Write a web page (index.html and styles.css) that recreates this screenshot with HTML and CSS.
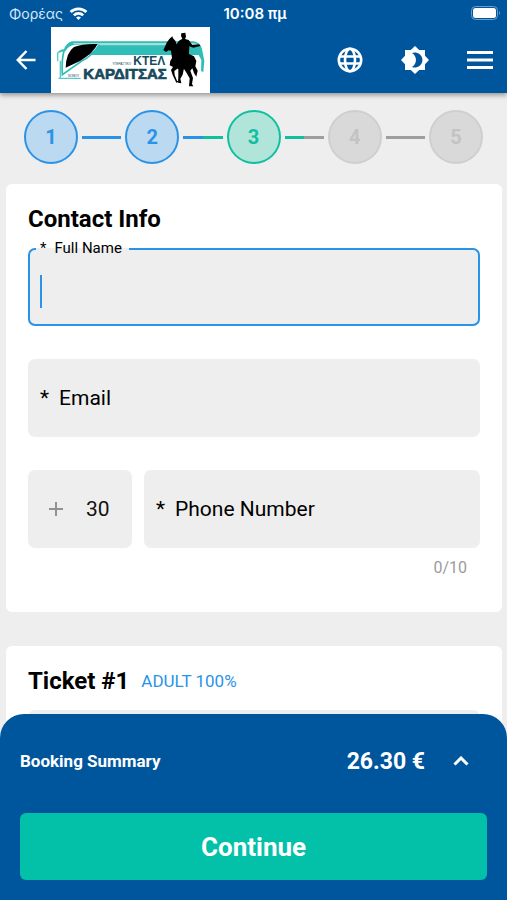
FILE: index.html
```
<!DOCTYPE html>
<html lang="en">
<head>
  <meta charset="UTF-8">
  <meta name="viewport" content="width=device-width, initial-scale=1">
  <title>Contact Info</title>
  <link rel="stylesheet" href="styles.css">
</head>
<body>
  <header class="header">
    <div class="status">
      <div class="carrier">
        <span>Φορέας</span>
        <svg width="19" height="13" viewBox="0 0 20 14" fill="none" stroke="#fff" stroke-width="3">
          <path d="M1.500 5.500a12 12 0 0 1 17 0"/>
          <path d="M5 9a7 7 0 0 1 10 0"/>
          <path d="M10 14l-2.600-2.600a3.700 3.700 0 0 1 5.200 0z" fill="#fff" stroke="none"/>
        </svg>
      </div>
      <span class="time">10:08 πμ</span>
      <svg class="battery" width="30" height="14" viewBox="0 0 30 14">
        <rect x="0.500" y="0.500" width="26" height="13" rx="4" fill="none" stroke="#6d9dc9"/>
        <rect x="2" y="2" width="23" height="10" rx="2.500" fill="#fff"/>
        <path d="M28 5q2 2 0 4z" fill="#6d9dc9"/>
      </svg>
    </div>
    <div class="appbar">
      <button class="icon-btn" type="button" aria-label="Back">
        <svg width="20" height="20" viewBox="0 0 20 20" fill="none" stroke="#fff" stroke-width="2.500">
          <path d="M19.500 10H2M10.500 1L1.800 10l8.700 9"/>
        </svg>
      </button>
      <a class="logo" href="#" aria-label="ΚΤΕΛ Καρδίτσας">
        <svg viewBox="153 79 477 198">
          <rect x="153" y="79" width="477" height="198" fill="#fff"/>
          <!-- bus -->
          <path d="M215 122H580Q600 124 606 145L613 180L610 214L603 211L604 178L596 163H262Q290 146 300 130L225 132Q205 134 196 152L174 155Q178 147 192 146Q198 128 215 122Z" fill="#2fbdb8"/>
          <path d="M220 127H580Q592 128 596 134H300L220 130Z" fill="#a5dfdc"/>
          <path d="M192 150Q184 180 187 222L245 181Q275 168 298 132" fill="none" stroke="#2fbdb8" stroke-width="5"/>
          <path d="M173 182V157L186 151M181 180V232M175 233H242" fill="none" stroke="#58c9c5" stroke-width="4"/>
          <path d="M197 201Q198 156 222 139Q250 128 293 130Q280 157 240 181Z" fill="#000"/>
          <text class="logo-tiny" x="337" y="194">ΥΠΕΡΑΣΤΙΚΟ</text>
          <text class="logo-small" x="400" y="194">ΚΤΕΛ</text>
          <text class="logo-tiny" x="204" y="228">ΝΟΜΟΥ</text>
          <text class="logo-big" x="250" y="234">ΚΑΡΔΙΤΣΑΣ</text>
          <!-- rider -->
          <path d="M544 98L556 96L558 108L555 115L566 118L577 133L598 131L601 136L580 141L568 137L567 160L582 167L589 181L586 197L593 210L589 228L582 217L577 203L571 210L579 232L576 250L580 257L567 257L569 233L558 214L552 205L543 207L532 204L523 211L524 223L531 240L537 243L529 246L518 223L513 208L519 199L509 194L511 180L516 173L513 150L506 149L498 154L490 149L500 126L508 115L517 107L519 113L526 120L530 131L536 121L547 114L543 106Z" fill="#000"/>
          <path d="M535 205L552 203L548 222L541 234L544 248L534 246L535 229Z" fill="#000"/>
        </svg>
      </a>
      <nav class="actions">
        <button class="icon-btn" type="button" aria-label="Language">
          <svg width="26" height="26" viewBox="0 0 26 26" fill="none" stroke="#fff" stroke-width="2.600">
            <circle cx="13" cy="13" r="11.200"/>
            <ellipse cx="13" cy="13" rx="5" ry="11.200"/>
            <path d="M3 9.500h20M3 16.500h20"/>
          </svg>
        </button>
        <button class="icon-btn" type="button" aria-label="Theme">
          <svg width="28" height="28" viewBox="0 0 28 28">
            <path d="M14 0l4.200 4H24v5.800l4 4.200-4 4.200V24h-5.800L14 28l-4.200-4H4v-5.800L0 14l4-4.200V4h5.800z" fill="#fff"/>
            <path d="M11 7.100a7.500 7.500 0 1 1 0 13.800a8 8 0 0 0 0-13.800z" fill="#00569d"/>
          </svg>
        </button>
        <button class="icon-btn" type="button" aria-label="Menu">
          <svg width="26" height="18" viewBox="0 0 26 18" fill="#fff">
            <path d="M0 0h26v3H0zM0 7.500h26v3H0zM0 15h26v3H0z"/>
          </svg>
        </button>
      </nav>
    </div>
  </header>

  <main class="content">
    <div class="stepper">
      <span class="step done">1</span>
      <span class="line line-done"></span>
      <span class="step done">2</span>
      <span class="line line-current"></span>
      <span class="step current">3</span>
      <span class="line line-next"></span>
      <span class="step">4</span>
      <span class="line"></span>
      <span class="step">5</span>
    </div>

    <form class="card" id="contact">
      <h2>Contact Info</h2>
      <fieldset class="focused">
        <legend><label for="name"><span class="star">*</span>Full Name</label></legend>
        <span class="caret"></span>
        <input id="name" type="text">
      </fieldset>
      <div class="field">
        <label for="email"><span class="star">*</span>Email</label>
        <input id="email" type="email">
      </div>
      <div class="phone">
        <div class="field code">
          <svg width="16" height="16" viewBox="0 0 16 16" stroke="#929292" stroke-width="2">
            <path d="M8 1v14M1 8h14"/>
          </svg>
          <input type="text" value="30" aria-label="Country code">
        </div>
        <div class="field">
          <label for="phone"><span class="star">*</span>Phone Number</label>
          <input id="phone" type="tel" maxlength="10">
        </div>
      </div>
      <div class="counter">0/10</div>
    </form>

    <section class="card ticket">
      <div class="ticket-title">
        <h2>Ticket #1</h2>
        <span class="fare">ADULT 100%</span>
      </div>
      <div class="field">
        <input type="text" aria-label="Passenger">
      </div>
    </section>
  </main>

  <footer class="summary">
    <div class="summary-row">
      <span class="summary-label">Booking Summary</span>
      <span class="price">26.30 €</span>
      <button class="icon-btn" type="button" aria-label="Show summary">
        <svg width="16" height="10" viewBox="0 0 16 10" fill="none" stroke="#fff" stroke-width="3">
          <path d="M1.500 8.500L8 2l6.500 6.500"/>
        </svg>
      </button>
    </div>
    <button class="continue" type="submit" form="contact">Continue</button>
  </footer>
</body>
</html>
```

FILE: styles.css
```
* {
  box-sizing: border-box;
}

body {
  margin: 0;
  height: 100vh;
  display: flex;
  flex-direction: column;
  background: #eeeeee;
  color: #000;
  font-family: Roboto, sans-serif;
}

button, input {
  font-family: inherit;
}

svg {
  display: block;
}

/* Header */
.header {
  position: relative;
  z-index: 1;
  background: #00569d;
  color: #fff;
  box-shadow: 0 2px 5px rgba(0, 0, 0, 0.4);
}

.status {
  display: grid;
  grid-template-columns: 1fr auto 1fr;
  align-items: center;
  height: 26px;
  padding: 0 6px 0 9px;
  font-family: Inter, sans-serif;
  font-size: 15px;
}

.carrier {
  display: flex;
  align-items: center;
  gap: 6px;
  color: #d5e8f8;
  font-size: 14px;
}

.time {
  font-weight: 600;
}

.battery {
  justify-self: end;
}

.appbar {
  display: flex;
  align-items: center;
  height: 67px;
  padding: 0 14px 0 16px;
}

.icon-btn {
  padding: 0;
  border: 0;
  background: none;
  cursor: pointer;
}

.logo {
  width: 159px;
  margin-left: 15px;
}

.logo-big, .logo-small {
  font-family: "Liberation Sans", sans-serif;
  font-weight: bold;
  font-size: 45px;
  fill: #174a5c;
  stroke: #174a5c;
  stroke-width: 2;
}

.logo-small {
  font-size: 36px;
  stroke-width: 0;
}

.logo-tiny {
  font-family: "Liberation Sans", sans-serif;
  font-size: 9px;
  fill: #174a5c;
}

.actions {
  display: flex;
  align-items: center;
  gap: 38px;
  margin-left: auto;
}

/* Steps */
.content {
  flex: 1;
  min-height: 0;
  overflow-y: auto;
  scrollbar-width: none;
}

.stepper {
  display: flex;
  align-items: center;
  padding: 17px 24px 20px;
}

.step {
  display: flex;
  align-items: center;
  justify-content: center;
  width: 54px;
  height: 54px;
  border: 2px solid #cfcfcf;
  border-radius: 50%;
  background: #d9d9d9;
  color: #c3c3c3;
  font-size: 20px;
  font-weight: bold;
}

.step.done {
  border-color: #2a93e8;
  background: #bbd9f0;
  color: #2a93e8;
}

.step.current {
  border-color: #10bf9f;
  background: #b1e5da;
  color: #10bf9f;
}

.line {
  flex: 1;
  height: 3px;
  margin: 0 4px;
  background: #9e9e9e;
}

.line-done {
  background: #2a93e8;
}

.line-current {
  background: linear-gradient(90deg, #2a93e8 50%, #10bf9f 50%);
}

.line-next {
  background: linear-gradient(90deg, #10bf9f 50%, #9e9e9e 50%);
}

/* Cards and fields */
.card {
  margin: 0 5px 34px 6px;
  padding: 21px 22px 34px;
  border-radius: 6px;
  background: #fff;
}

h2 {
  margin: 0;
  font-size: 24px;
  line-height: 28px;
}

fieldset {
  display: flex;
  align-items: center;
  height: 87px;
  margin: 6px 0 33px;
  padding: 0 10px;
  border: 2px solid #2a93e8;
  border-radius: 7px;
  background: #eeeeee;
}

legend {
  margin-left: -4px;
  padding: 0 7px 2px 4px;
  font-size: 15px;
  line-height: 18px;
}

.caret {
  width: 2px;
  height: 33px;
  background: #2a93e8;
}

.field {
  display: flex;
  align-items: center;
  flex: 1;
  min-width: 0;
  height: 78px;
  padding: 0 12px;
  border-radius: 7px;
  background: #eeeeee;
  font-size: 21px;
}

.star {
  margin-right: 10px;
}

legend .star {
  margin-right: 8px;
}

.field label {
  white-space: nowrap;
}

input {
  flex: 1;
  min-width: 0;
  padding: 0;
  border: 0;
  outline: 0;
  background: none;
  color: #111;
  font-size: 21px;
}

.phone {
  display: flex;
  gap: 12px;
  margin-top: 33px;
}

.code {
  flex: none;
  width: 104px;
  padding: 0 20px;
  gap: 22px;
}

.counter {
  padding: 10px 13px 0;
  color: #9b9b9b;
  font-size: 16px;
  line-height: 20px;
  text-align: right;
}

.ticket-title {
  display: flex;
  align-items: center;
  gap: 12px;
  margin-bottom: 15px;
}

.fare {
  color: #2a93e8;
  font-size: 17px;
}

/* Booking summary */
.summary {
  position: relative;
  margin-top: -24px;
  padding: 20px;
  border-radius: 24px 24px 0 0;
  background: #00569d;
  color: #fff;
}

.summary-row {
  display: flex;
  align-items: center;
  height: 54px;
  padding-right: 18px;
}

.summary-label {
  font-size: 17px;
  font-weight: bold;
}

.price {
  margin: 0 28px 0 auto;
  font-size: 23px;
  font-weight: bold;
}

.continue {
  display: block;
  width: 100%;
  height: 67px;
  margin-top: 25px;
  border: 0;
  border-radius: 6px;
  background: #03c1a9;
  color: #fff;
  font-size: 26px;
  font-weight: bold;
}
```
